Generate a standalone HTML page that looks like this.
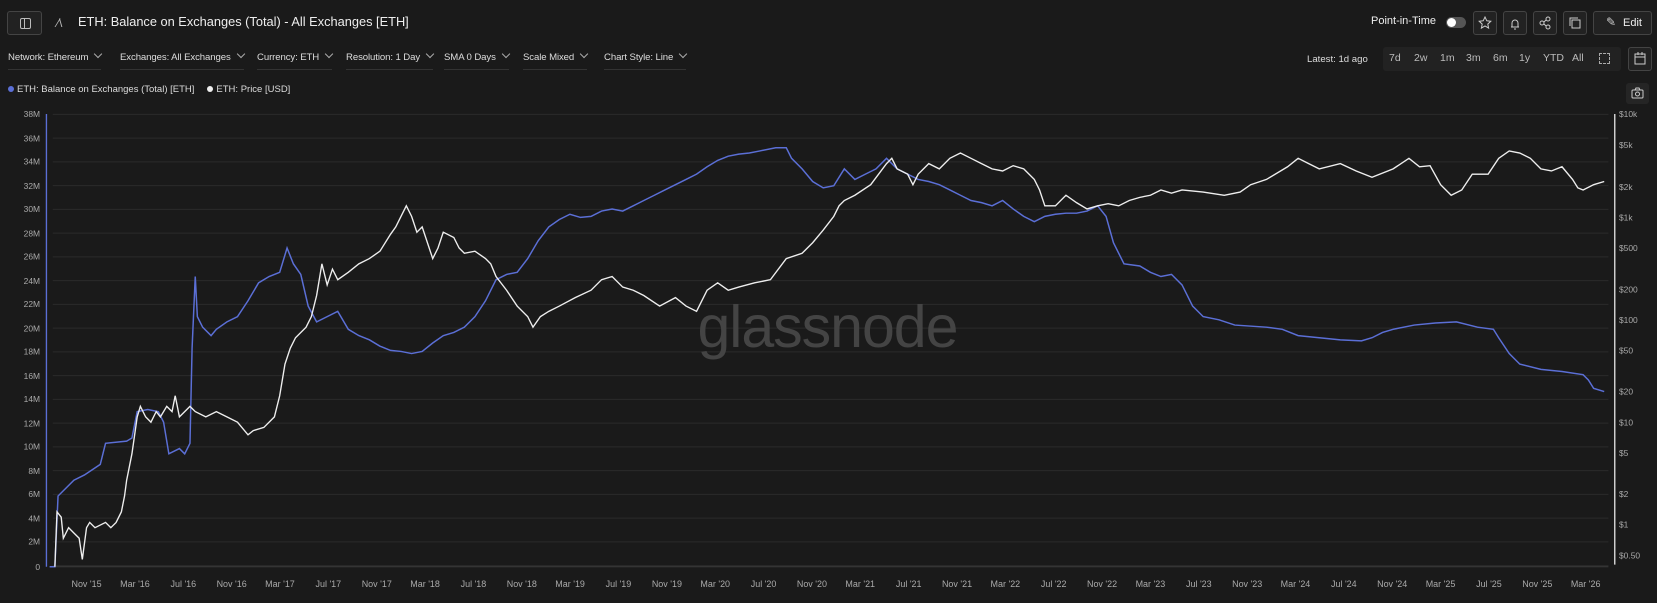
<!DOCTYPE html>
<html><head><meta charset="utf-8"><style>
*{margin:0;padding:0;box-sizing:border-box}
body{width:1657px;height:603px;background:#1a1a1a;font-family:"Liberation Sans",sans-serif;color:#ddd;position:relative;overflow:hidden}
.a{position:absolute;white-space:nowrap}
.btn{position:absolute;border:1px solid #444;border-radius:3px;background:#222;height:24px;top:11px;width:24px}
.f{position:absolute;top:52px;font-size:9.6px;color:#ddd;padding-bottom:6px;border-bottom:1px solid #333;letter-spacing:-0.1px}
.f:after{content:"";display:inline-block;width:5px;height:5px;border-right:1px solid #aaa;border-bottom:1px solid #aaa;transform:rotate(45deg);margin-left:7px;position:relative;top:-3px}
</style></head><body>
<div class="btn" style="left:7px;top:11px;width:35px;height:24px"><div style="position:absolute;left:12px;top:6px;width:11px;height:11px;border:1px solid #bbb;border-radius:2px"></div><div style="position:absolute;left:16px;top:6px;width:1px;height:11px;background:#bbb"></div></div>
<div class="a" style="left:57px;top:16px;font-size:12px;color:#bbb">⁄\</div>
<div class="a" style="left:78px;top:14px;font-size:12.8px;color:#eee">ETH: Balance on Exchanges (Total) - All Exchanges [ETH]</div>
<div class="a" style="left:1371px;top:15px;font-size:11px;color:#eee">Point-in-Time</div>
<div class="a" style="left:1446px;top:17px;width:20px;height:11px;border-radius:6px;background:#555"><div style="width:9px;height:9px;border-radius:5px;background:#fff;margin:1px"></div></div>
<div class="btn" style="left:1473px"><svg width="22" height="22"><path d="M11 5l1.8 3.8 4 .5-3 2.8.8 4L11 14l-3.6 2.1.8-4-3-2.8 4-.5z" fill="none" stroke="#ccc" stroke-width="1"/></svg></div>
<div class="btn" style="left:1503px"><svg width="22" height="22"><path d="M7 15h8M8 15v-4a3 3 0 016 0v4M10 17h2" fill="none" stroke="#ccc"/></svg></div>
<div class="btn" style="left:1533px"><svg width="22" height="22"><circle cx="8" cy="11" r="2" fill="none" stroke="#ccc"/><circle cx="14" cy="7" r="2" fill="none" stroke="#ccc"/><circle cx="14" cy="15" r="2" fill="none" stroke="#ccc"/><path d="M10 10l2-2M10 12l2 2" stroke="#ccc"/></svg></div>
<div class="btn" style="left:1563px"><svg width="22" height="22"><rect x="8" y="8" width="8" height="8" fill="none" stroke="#ccc"/><path d="M6 14V6h8" fill="none" stroke="#ccc"/></svg></div>
<div class="btn" style="left:1593px;width:59px"><span style="position:absolute;left:12px;top:3px;font-size:12px;color:#ccc">✎</span><span style="position:absolute;left:29px;top:5px;font-size:11px;color:#eee">Edit</span></div>

<div class="f" style="left:8px">Network: Ethereum</div>
<div class="f" style="left:120px">Exchanges: All Exchanges</div>
<div class="f" style="left:257px">Currency: ETH</div>
<div class="f" style="left:346px">Resolution: 1 Day</div>
<div class="f" style="left:444px">SMA 0 Days</div>
<div class="f" style="left:523px">Scale Mixed</div>
<div class="f" style="left:604px">Chart Style: Line</div>

<div class="a" style="left:1307px;top:54px;font-size:9.6px;color:#ddd">Latest: 1d ago</div>
<div class="a" style="left:1383px;top:47px;width:238px;height:24px;background:#222;border-radius:3px;font-size:10.5px;color:#bbb">
<span class="a" style="left:6px;top:5px">7d</span><span class="a" style="left:31px;top:5px">2w</span><span class="a" style="left:57px;top:5px">1m</span><span class="a" style="left:83px;top:5px">3m</span><span class="a" style="left:110px;top:5px">6m</span><span class="a" style="left:136px;top:5px">1y</span><span class="a" style="left:160px;top:5px">YTD</span><span class="a" style="left:189px;top:5px">All</span><span class="a" style="left:216px;top:6px;width:11px;height:11px;border:1px dashed #aaa"></span></div>
<div class="btn" style="left:1628px;top:47px;height:24px;width:24px"><svg width="22" height="22"><rect x="6" y="6" width="10" height="10" fill="none" stroke="#ccc"/><path d="M6 9h10M9 4v3M13 4v3" stroke="#ccc"/></svg></div>
<div class="a" style="left:1626px;top:83px;width:23px;height:21px;background:#252525;border-radius:3px"><svg width="23" height="21"><rect x="6" y="7" width="11" height="8" rx="1" fill="none" stroke="#ccc"/><circle cx="11.5" cy="11" r="2" fill="none" stroke="#ccc"/><path d="M9 7l1-2h3l1 2" fill="none" stroke="#ccc"/></svg></div>

<div class="a" style="left:8px;top:84px;font-size:9.5px;color:#ddd"><span style="display:inline-block;width:6px;height:6px;border-radius:3px;background:#5b6fd6;margin-right:3px"></span>ETH: Balance on Exchanges (Total) [ETH]<span style="display:inline-block;width:6px;height:6px;border-radius:3px;background:#eee;margin:0 3px 0 13px"></span>ETH: Price [USD]</div>

<svg class="a" style="left:0;top:0" width="1657" height="603">
<g transform="scale(1.0554)">
<g stroke="#2b2b2b" stroke-width="1">
<path d="M50 108.4H1524M50 130.9H1524M50 153.4H1524M50 175.9H1524M50 198.4H1524M50 220.9H1524M50 243.4H1524M50 265.9H1524M50 288.4H1524M50 310.9H1524M50 333.4H1524M50 355.9H1524M50 378.4H1524M50 400.9H1524M50 423.4H1524M50 445.9H1524M50 468.4H1524M50 490.9H1524M50 513.4H1524M50 536H1524"/>
</g>
<path d="M50 537H1524" stroke="#3a3a3a"/>
<path d="M44 108V537" stroke="#5b6fd6" stroke-width="1.3"/>
<path d="M1530 108V535" stroke="#ddd" stroke-width="1.3"/>
<text x="784" y="329" font-size="56" fill="#444" text-anchor="middle" font-family="Liberation Sans,sans-serif" letter-spacing="-1">glassnode</text>
<g font-size="8" fill="#aaa" text-anchor="end">
<text x="38" y="111">38M</text><text x="38" y="134">36M</text><text x="38" y="156">34M</text><text x="38" y="179">32M</text><text x="38" y="201">30M</text><text x="38" y="224">28M</text><text x="38" y="246">26M</text><text x="38" y="269">24M</text><text x="38" y="291">22M</text><text x="38" y="314">20M</text><text x="38" y="336">18M</text><text x="38" y="359">16M</text><text x="38" y="381">14M</text><text x="38" y="404">12M</text><text x="38" y="426">10M</text><text x="38" y="449">8M</text><text x="38" y="471">6M</text><text x="38" y="494">4M</text><text x="38" y="516">2M</text><text x="38" y="540">0</text>
</g>
<g font-size="8" fill="#aaa">
<text x="1534" y="111">$10k</text><text x="1534" y="140">$5k</text><text x="1534" y="180">$2k</text><text x="1534" y="209">$1k</text><text x="1534" y="238">$500</text><text x="1534" y="277">$200</text><text x="1534" y="306">$100</text><text x="1534" y="335">$50</text><text x="1534" y="374">$20</text><text x="1534" y="403">$10</text><text x="1534" y="432">$5</text><text x="1534" y="471">$2</text><text x="1534" y="500">$1</text><text x="1534" y="529">$0.50</text>
</g>
<g font-size="8.5" fill="#aaa" text-anchor="middle">
<text x="82" y="556">Nov '15</text><text x="127.9" y="556">Mar '16</text><text x="173.7" y="556">Jul '16</text><text x="219.5" y="556">Nov '16</text><text x="265.3" y="556">Mar '17</text><text x="311.1" y="556">Jul '17</text><text x="357" y="556">Nov '17</text><text x="402.8" y="556">Mar '18</text><text x="448.6" y="556">Jul '18</text><text x="494.4" y="556">Nov '18</text><text x="540.2" y="556">Mar '19</text><text x="586" y="556">Jul '19</text><text x="631.9" y="556">Nov '19</text><text x="677.7" y="556">Mar '20</text><text x="723.5" y="556">Jul '20</text><text x="769.3" y="556">Nov '20</text><text x="815.1" y="556">Mar '21</text><text x="861" y="556">Jul '21</text><text x="906.8" y="556">Nov '21</text><text x="952.6" y="556">Mar '22</text><text x="998.4" y="556">Jul '22</text><text x="1044.2" y="556">Nov '22</text><text x="1090" y="556">Mar '23</text><text x="1135.9" y="556">Jul '23</text><text x="1181.7" y="556">Nov '23</text><text x="1227.5" y="556">Mar '24</text><text x="1273.3" y="556">Jul '24</text><text x="1319.1" y="556">Nov '24</text><text x="1364.9" y="556">Mar '25</text><text x="1410.8" y="556">Jul '25</text><text x="1456.6" y="556">Nov '25</text><text x="1502.4" y="556">Mar '26</text>
</g>
<polyline fill="none" stroke="#5b6fd6" stroke-width="1.4" points="47,537 52,537 55,470 60,465 70,455 80,450 95,440 100,420 120,418 125,415 130,390 140,388 150,390 155,400 160,430 170,425 175,430 180,420 182,330 185,262 187,300 192,310 200,318 205,312 215,305 225,300 235,285 245,268 255,262 265,258 272,235 278,250 285,260 292,290 300,305 310,300 320,295 330,312 340,318 350,322 360,328 370,332 380,333 390,335 400,333 410,325 420,318 430,315 440,310 450,300 460,285 470,265 480,260 490,258 500,245 510,228 520,215 530,208 540,203 550,206 560,205 570,200 580,198 590,200 600,195 610,190 620,185 630,180 640,175 650,170 660,165 670,158 680,152 690,148 700,146 710,145 720,143 735,140 745,140 750,150 760,160 770,172 780,178 790,176 800,160 810,170 820,165 830,160 840,150 850,160 860,165 870,170 880,172 890,175 900,180 910,185 920,190 930,192 940,195 950,190 960,198 970,205 980,210 990,205 1000,203 1010,202 1020,202 1030,200 1040,195 1048,205 1055,230 1065,250 1080,252 1090,258 1100,262 1110,260 1120,270 1130,290 1140,300 1155,303 1170,308 1200,310 1215,312 1230,318 1250,320 1270,322 1290,323 1300,320 1310,315 1320,312 1340,308 1360,306 1380,305 1400,310 1415,312 1420,320 1430,335 1440,345 1460,350 1480,352 1500,355 1505,360 1510,368 1520,371"/>
<polyline fill="none" stroke="#eee" stroke-width="1.3" points="52,537 54,485 58,490 60,510 65,500 70,505 75,510 78,530 82,500 85,495 90,500 100,495 105,500 110,495 115,485 118,470 120,455 125,430 130,395 133,385 138,395 143,400 148,390 152,395 158,385 163,390 166,375 170,395 175,390 180,385 185,390 195,395 205,390 215,395 225,400 235,412 240,408 250,405 260,395 265,375 270,345 275,330 280,320 290,310 295,300 300,280 305,250 310,270 315,255 320,265 330,258 340,250 350,245 360,238 370,222 375,215 380,205 385,195 390,205 395,220 400,215 410,245 415,235 420,220 430,225 435,235 440,240 450,238 460,245 465,250 470,262 480,275 490,290 500,300 505,310 512,300 520,295 530,290 545,282 560,275 570,265 580,262 590,272 600,275 610,280 625,290 640,282 650,290 660,295 670,275 680,268 690,275 700,272 715,268 730,265 745,245 760,240 770,230 780,218 790,205 795,195 800,190 810,185 825,175 840,155 845,150 850,160 860,165 865,175 870,165 880,155 890,160 900,150 910,145 920,150 930,155 940,160 950,162 960,157 970,160 980,170 985,180 990,195 1000,195 1010,185 1020,192 1030,198 1040,195 1050,193 1060,195 1070,190 1080,187 1090,185 1100,180 1110,183 1120,180 1140,182 1160,185 1175,182 1185,175 1200,170 1220,158 1230,150 1240,155 1250,160 1270,155 1285,162 1300,168 1320,160 1335,150 1345,158 1355,157 1365,175 1375,185 1385,180 1395,165 1410,165 1420,150 1430,143 1440,145 1450,150 1460,160 1470,162 1480,158 1490,170 1495,178 1500,180 1510,175 1520,172"/>
</g>
</svg>
</body></html>
